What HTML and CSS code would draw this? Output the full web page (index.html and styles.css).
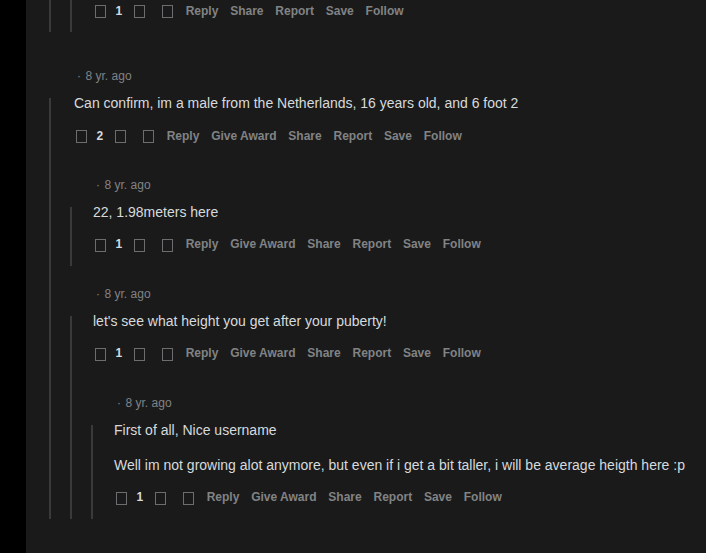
FILE: index.html
```html
<!DOCTYPE html>
<html lang="en">
<head>
<meta charset="utf-8">
<title>Comments</title>
<link rel="stylesheet" href="styles.css">
</head>
<body>
<div class="main">
  <div class="comment top partial">
    <div class="thread">
      <div class="comment partial">
        <div class="thread">
          <div class="actions lead">
            <span class="ico"></span><span class="count">1</span><span class="ico down"></span><span class="ico talk"></span>
            <span class="btn first">Reply</span><span class="btn">Share</span><span class="btn">Report</span><span class="btn">Save</span><span class="btn">Follow</span>
          </div>
        </div>
      </div>
    </div>
  </div>

  <div class="comment top">
    <div class="head"><span class="dot">·</span> 8 yr. ago</div>
    <div class="thread">
      <p>Can confirm, im a male from the Netherlands, 16 years old, and 6 foot 2</p>
      <div class="actions">
        <span class="ico"></span><span class="count">2</span><span class="ico down"></span><span class="ico talk"></span>
        <span class="btn first">Reply</span><span class="btn">Give Award</span><span class="btn">Share</span><span class="btn">Report</span><span class="btn">Save</span><span class="btn">Follow</span>
      </div>

      <div class="comment">
        <div class="head"><span class="dot">·</span> 8 yr. ago</div>
        <div class="thread">
          <p>22, 1.98meters here</p>
          <div class="actions">
            <span class="ico"></span><span class="count">1</span><span class="ico down"></span><span class="ico talk"></span>
            <span class="btn first">Reply</span><span class="btn">Give Award</span><span class="btn">Share</span><span class="btn">Report</span><span class="btn">Save</span><span class="btn">Follow</span>
          </div>
        </div>
      </div>

      <div class="comment">
        <div class="head"><span class="dot">·</span> 8 yr. ago</div>
        <div class="thread">
          <p>let's see what height you get after your puberty!</p>
          <div class="actions">
            <span class="ico"></span><span class="count">1</span><span class="ico down"></span><span class="ico talk"></span>
            <span class="btn first">Reply</span><span class="btn">Give Award</span><span class="btn">Share</span><span class="btn">Report</span><span class="btn">Save</span><span class="btn">Follow</span>
          </div>

          <div class="comment">
            <div class="head"><span class="dot">·</span> 8 yr. ago</div>
            <div class="thread">
              <p>First of all, Nice username</p>
              <p>Well im not growing alot anymore, but even if i get a bit taller, i will be average heigth here :p</p>
              <div class="actions">
                <span class="ico"></span><span class="count">1</span><span class="ico down"></span><span class="ico talk"></span>
                <span class="btn first">Reply</span><span class="btn">Give Award</span><span class="btn">Share</span><span class="btn">Report</span><span class="btn">Save</span><span class="btn">Follow</span>
              </div>
            </div>
          </div>
        </div>
      </div>
    </div>
  </div>
</div>
</body>
</html>
```
FILE: styles.css
```css
html, body {
  margin: 0;
  padding: 0;
  background: #000;
}

body {
  font-family: "Liberation Sans", Arial, sans-serif;
  color: #d7dadc;
}

.main {
  margin-left: 26px;
  min-height: 100vh;
  background: #1a1a1b;
  padding-left: 23px;
  overflow: hidden;
}

.comment {
  padding-top: 20.34px;
}

.comment.top {
  margin-top: 16px;
}

.comment.partial {
  padding-top: 0;
  margin-top: 0;
}

.head {
  font-size: 12px;
  line-height: 16px;
  color: #818384;
  margin-bottom: 13.66px;
  padding-left: 26px;
  white-space: nowrap;
}

.dot {
  margin-right: 1.2px;
}

.top > .head {
  padding-left: 28px;
}

.thread {
  display: flex;
  flex-direction: column;
  border-left: 2px solid #393a3b;
}

.thread > .comment {
  margin-left: 19px;
}

.thread > p {
  margin: 15px 0 0;
  padding-left: 21px;
  font-size: 14px;
  line-height: 20px;
  color: #d7dadc;
  white-space: nowrap;
}

.top > .thread > p {
  padding-left: 23px;
}

.thread > p:first-child {
  margin-top: -5px;
}

.actions {
  display: flex;
  align-items: center;
  height: 24px;
  margin: 10.6px 0 9.4px;
  padding-left: 23px;
  font-size: 12px;
  line-height: 16px;
  font-weight: 700;
  color: #818384;
  white-space: nowrap;
}

.top > .thread > .actions {
  padding-left: 25px;
}

.actions.lead {
  margin-top: -1.46px;
}

.ico {
  display: block;
  flex: none;
  width: 9px;
  height: 11px;
  border: 1px solid #6c6d6e;
  margin-top: 2px;
}

.count {
  margin-left: 9.6px;
  color: #d7dadc;
}

.ico.down {
  margin-left: 11.7px;
}

.ico.talk {
  margin-left: 16.7px;
}

.btn {
  margin-left: 11.8px;
}

.btn.first {
  margin-left: 13px;
}
```
